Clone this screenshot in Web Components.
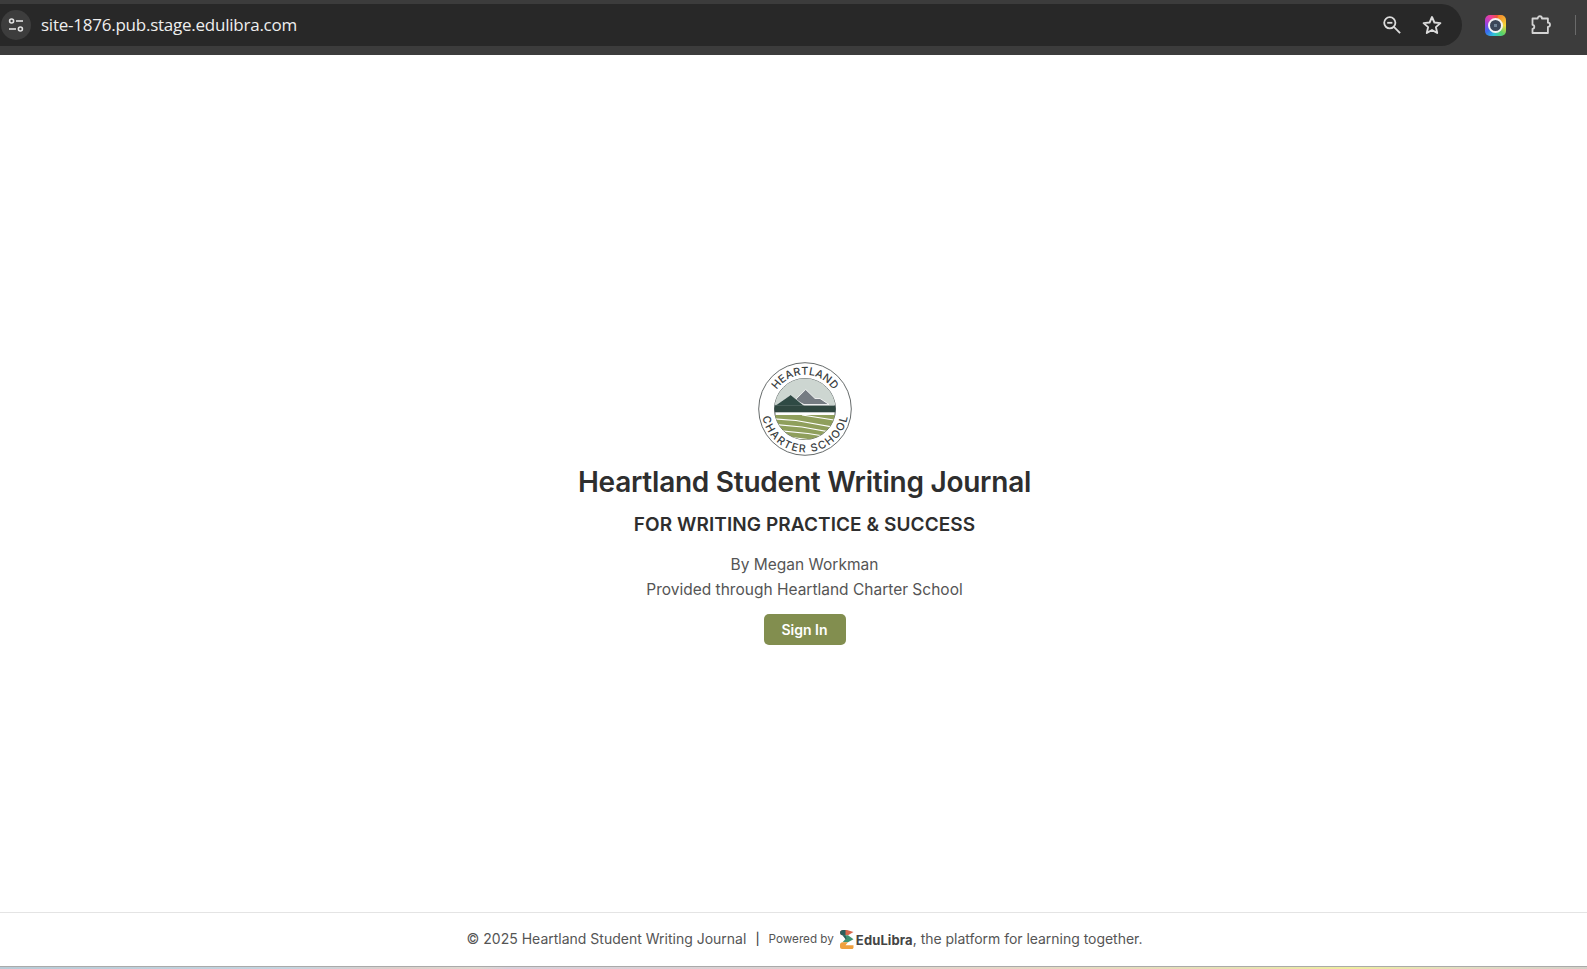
<!DOCTYPE html>
<html lang="en"><head><meta charset="utf-8"><title>Heartland Student Writing Journal</title>
<style>
html,body{margin:0;height:100%;background:#fff}
body{overflow:hidden;font-family:Inter,"Liberation Sans",sans-serif}
</style></head><body>
<app-shell></app-shell>
<script>
function def(name, html){
  customElements.define(name, class extends HTMLElement{
    constructor(){super();this.attachShadow({mode:'open'}).innerHTML=html;}
  });
}
def('browser-bar',`<style>
:host{display:flex;align-items:center;height:55px;background:#3c3c3c;box-sizing:border-box;padding:4px 0 9px;flex:none}
.omni{flex:none;width:1463px;height:42px;margin-left:-1px;background:#282828;border-radius:0 21px 21px 0;display:flex;align-items:center;box-sizing:border-box}
.tune{width:30px;height:30px;border-radius:50%;background:#3d3d3d;margin-left:2px;display:flex;align-items:center;justify-content:center;flex:none}
.url{margin-left:10px;font:17px/24px "Open Sans","Liberation Sans",sans-serif;color:#eee;letter-spacing:-.24px;flex:1}
.r{display:flex;align-items:center}
svg{display:block}
.tools{display:flex;align-items:center;flex:1}
.lens{margin-left:23px;width:21px;height:21px;border-radius:5px;background:conic-gradient(from 20deg,#f58a2c,#f3d63a 70deg,#57d36a 120deg,#2fc6d8 170deg,#3a6cf0 215deg,#9a3fe0 260deg,#ee3f9e 310deg,#f0523c 350deg,#f58a2c);display:flex;align-items:center;justify-content:center}
.lens i{display:block;box-sizing:border-box;width:15px;height:15px;border-radius:50%;background:radial-gradient(circle,#6f8296 0 1.5px,#3b4658 2px);border:2px solid #f4f4f4}
</style>
<div class="omni">
 <div class="tune"><svg width="18" height="18" viewBox="0 0 18 18" fill="none" stroke="#e3e3e3" stroke-width="1.6"><circle cx="4.6" cy="5" r="2"/><path d="M9 5h7"/><path d="M2 13h7"/><circle cx="13.4" cy="13" r="2"/></svg></div>
 <div class="url">site-1876.pub.stage.edulibra.com</div>
 <div class="r" style="margin-right:20px;gap:20px">
  <svg width="20" height="20" viewBox="0 0 20 20" fill="none" stroke="#dcdcdc" stroke-width="1.8"><circle cx="7.800" cy="7.800" r="5.600"/><path d="M5.200 7.800h5.200"/><path d="M11.900 11.900l6.200 6.200"/></svg>
  <svg width="20" height="20" viewBox="0 0 20 20" fill="none" stroke="#dcdcdc" stroke-width="1.9" stroke-linejoin="round"><path d="M10 2l2.400 5.500 6 .6-4.500 4 1.300 5.900L10 15l-5.200 3 1.300-5.900-4.500-4 6-.6z"/></svg>
 </div>
</div>
<div class="tools">
 <div class="lens"><i></i></div>
 <svg style="margin-left:24px" width="22" height="22" viewBox="0 0 22 22" fill="none" stroke="#d4d4d4" stroke-width="1.8" stroke-linejoin="round"><path d="M2.500 4.500h5.200c0-3 4.200-3 4.200 0h6v4.200c2.800 0 2.800 4.200 0 4.200v6.100H2.500v-4.200c2.400 0 2.400-4 0-4z"/></svg>
 <div style="margin-left:23px;width:1px;height:20px;background:#6a6a6a"></div>
</div>`);

def('site-logo',`<style>:host{display:block;width:94px;height:94px}svg{display:block}text{font-family:Inter,"Liberation Sans",sans-serif;font-size:10.8px;font-weight:500;fill:#3a4041}</style>
<svg width="94" height="94" viewBox="0 0 94 94">
<defs>
<clipPath id="c"><circle cx="47" cy="47" r="30.500"/></clipPath>
<path id="top" d="M12.800 47a34.200 34.200 0 0 1 68.400 0"/>
<path id="bot" d="M3.600 47a43.400 43.400 0 0 0 86.800 0"/>
</defs>
<circle cx="47" cy="47" r="46.300" fill="#fff" stroke="#666b6b" stroke-width="1"/>
<circle cx="47" cy="47" r="30.500" fill="#fff" stroke="#5a6262" stroke-width="1"/>
<g clip-path="url(#c)">
<rect x="14" y="14" width="66" height="29" fill="#cdd6d1"/>
<path d="M37 38L47.700 27.500 57 36.500 62 36.500 71 42.500H46z" fill="#757c82" stroke="#fff" stroke-width=".8" stroke-linejoin="round"/>
<path d="M14 44L19 42.300 32.700 32.800 46.500 44z" fill="#2f4a44" stroke="#fff" stroke-width=".5" stroke-linejoin="round"/>
<rect x="14" y="43.500" width="66" height="6.800" fill="#2f4740"/>
<path d="M14 53h66v30H14z" fill="#8f9f5c"/>
<g fill="none" stroke="#fff" stroke-width="1.200">
<path d="M12 56.500L38 58.500 80 66"/>
<path d="M12 62L44 65 80 71.500"/>
<path d="M14 68L50 71.500 78 76"/>
<path d="M18 73.500L46 77 66 80"/>
<path d="M44 53L76 58"/>
</g>
</g>
<text text-anchor="middle"><textPath href="#top" startOffset="50%" textLength="67" lengthAdjust="spacing">HEARTLAND</textPath></text>
<text text-anchor="middle"><textPath href="#bot" startOffset="50%" textLength="120" lengthAdjust="spacing">CHARTER SCHOOL</textPath></text>
</svg>`);

def('hero-title',`<style>:host{display:block}h1{margin:0;font:600 28px/36px Inter,sans-serif;color:#2e2e2e;text-align:center;letter-spacing:-.25px;white-space:nowrap}</style><h1><slot></slot></h1>`);
def('hero-subtitle',`<style>:host{display:block}h2{margin:0;font:600 19px/26px Inter,sans-serif;color:#2e2e2e;text-align:center;white-space:nowrap;letter-spacing:.08px}</style><h2><slot></slot></h2>`);
def('hero-byline',`<style>:host{display:block}p{margin:0;font:400 15.5px/25px Inter,sans-serif;color:#555;text-align:center;white-space:nowrap}</style><p><slot></slot></p>`);
def('sign-button',`<style>:host{display:block}a{display:block;width:82px;height:31px;box-sizing:border-box;background:#828e4f;border-radius:5px;color:#fff;font:600 14px/31px Inter,sans-serif;text-align:center;text-decoration:none}</style><a href="#"><slot></slot></a>`);

def('site-footer',`<style>
:host{display:flex;flex:none;height:54px;box-sizing:border-box;border-top:1px solid #e4e4e4;align-items:center;justify-content:center;background:#fff;color:#555;font:400 14px/20px Inter,sans-serif;white-space:nowrap;padding:0 0 1px 22px}
.sep{margin:0 9px;color:#444;font-size:12px;font-weight:500}
.p{font-size:11.7px;margin-right:5px}
.brand{font:700 13px/20px Inter,sans-serif;color:#444;letter-spacing:.12px;margin-top:1px}
.rest{letter-spacing:-.03px}
svg{display:block;margin-right:2px}
</style>
<span>© 2025 Heartland Student Writing Journal</span><span class="sep">|</span><span class="p">Powered by</span>
<svg width="15" height="19" viewBox="0 0 15 19"><path d="M1 2.500C1 1 2.500 0 4 0h4l6.500 2L9 5.200H3.500C2 5.200 1 4 1 2.500z" fill="#d8694c"/><path d="M1 2.500C1 1 2.500 0 4 0h2.500v5.200h-3C2 5.200 1 4 1 2.500z" fill="#2c5f5d"/><path d="M3.500 5.200H9l5.500 4-5.500 3H3.500l3.500-3.600z" fill="#3f9272"/><path d="M3.500 5.200h3l1 3.700-1 .4z" fill="#2c5f5d"/><path d="M3.500 12.200H9l-2.500 3h8V17.500c0 .8-.7 1.500-1.500 1.500H3c-1.100 0-2-.9-2-2v-2.300c0-1.400 1.100-2.500 2.500-2.500z" fill="#efa03e"/></svg>
<span class="brand">EduLibra</span><span class="rest">, the platform for learning together.</span>`);

def('app-shell',`<style>
:host{display:flex;flex-direction:column;height:969px;width:1587px;overflow:hidden;background:#fff}
main{flex:1;display:flex;flex-direction:column;align-items:center;padding:307px 0 0 22px;box-sizing:border-box;min-height:0}
.strip{flex:none;height:3px;background:linear-gradient(90deg,#b9cbd6 0,#c4d4df 18%,#dccfca 25%,#ded8d0 30%,#d8d0da 32%,#dcd2d2 50%,#e4d6c8 62%,#e6e0b4 78%,#efec9e 85%,#e2dcc0 92%,#d4d0c8 100%);border-top:1px solid #aaa;box-sizing:border-box}
site-logo{margin-bottom:8px}
hero-title{margin-bottom:12px}
hero-subtitle{margin-bottom:14px}
sign-button{margin-top:12px}
</style>
<browser-bar></browser-bar>
<main>
<site-logo></site-logo>
<hero-title>Heartland Student Writing Journal</hero-title>
<hero-subtitle>FOR WRITING PRACTICE &amp; SUCCESS</hero-subtitle>
<hero-byline>By Megan Workman</hero-byline>
<hero-byline>Provided through Heartland Charter School</hero-byline>
<sign-button>Sign In</sign-button>
</main>
<site-footer></site-footer>
<div class="strip"></div>`);
</script>
</body></html>
